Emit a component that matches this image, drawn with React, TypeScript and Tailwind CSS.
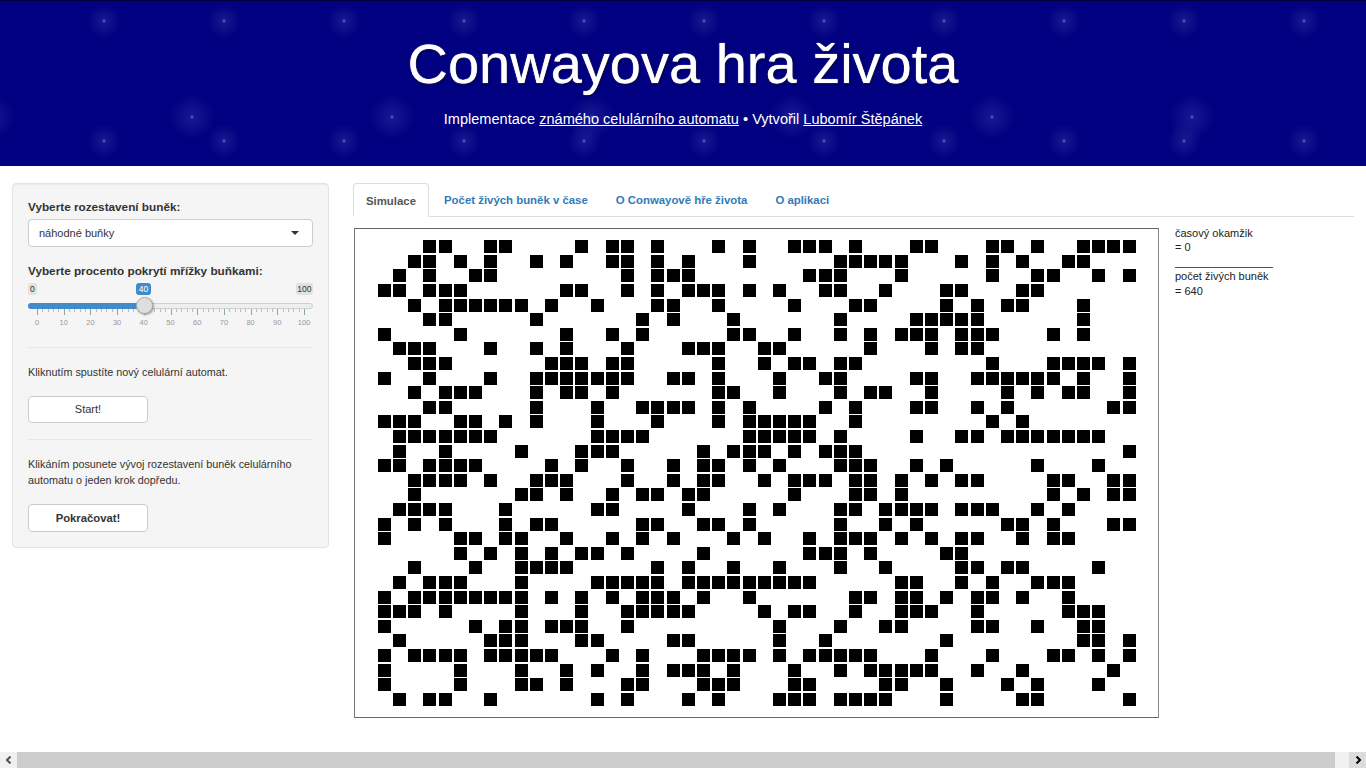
const rows: number[][] = [
  [3,4,7,8,13,15,16,18,22,24,27,28,29,31,35,36,40,41,43,46,47,48,49],
  [2,3,5,7,10,12,15,16,18,20,24,30,31,32,33,34,38,40,42,45,46],
  [1,3,6,7,16,18,19,20,28,29,30,34,40,43,44,47,49],
  [0,1,3,4,5,12,13,16,18,20,21,22,24,26,29,30,33,37,38,42,43],
  [2,4,5,6,7,8,9,11,14,18,19,22,27,31,32,37,39,41,42,46],
  [3,4,10,17,19,23,30,35,36,37,38,39,46],
  [0,5,12,15,17,23,24,27,30,32,34,35,36,38,39,40,44,46],
  [1,2,3,7,10,12,16,20,21,22,25,26,32,36,38,39],
  [2,3,4,11,12,13,15,16,22,25,27,28,30,31,40,44,45,46,47,49],
  [0,3,7,10,11,12,13,14,15,16,19,20,22,26,29,30,35,36,39,40,41,42,43,44,46,49],
  [2,4,5,6,10,12,13,15,22,23,26,30,32,33,36,41,43,45,46,49],
  [3,4,10,14,17,18,19,20,22,24,29,31,35,36,39,41,48,49],
  [0,1,2,5,6,8,10,14,18,22,24,25,26,27,28,31,40,42],
  [1,2,3,4,5,6,7,14,15,16,17,24,25,26,27,28,30,35,38,39,41,42,43,44,45,46,47],
  [1,4,9,13,14,15,21,23,24,25,27,29,30,31,49],
  [0,1,3,4,5,6,11,13,16,19,21,22,24,26,30,31,32,35,37,43,47],
  [2,3,4,5,7,10,11,12,16,19,21,22,25,27,28,29,31,32,34,36,38,39,44,45,48,49],
  [2,9,10,12,15,17,18,20,21,27,31,32,34,44,46,48,49],
  [1,2,3,4,8,14,15,20,24,26,30,31,33,34,35,36,38,39,40,43,45],
  [0,2,4,8,10,11,17,18,21,22,24,30,33,35,41,42,44,48,49],
  [0,5,6,8,9,12,15,17,19,23,25,28,30,31,32,34,36,38,39,42,44,45],
  [5,7,9,11,13,14,16,21,28,29,30,32,37,38],
  [2,6,9,10,11,12,18,20,23,26,30,33,38,39,41,42,47],
  [1,3,4,5,9,14,15,16,17,18,20,21,22,23,24,25,26,27,28,34,35,38,40,43,44,45],
  [0,2,3,4,5,6,7,8,9,11,13,15,17,18,19,21,24,31,32,34,35,37,39,40,42,45],
  [0,1,2,4,9,13,16,17,18,19,20,25,27,28,31,34,35,36,39,45,46,47],
  [0,6,8,9,11,12,13,16,26,30,33,34,39,40,43,46,47],
  [1,7,8,9,13,14,19,20,26,29,37,46,47,49],
  [0,2,3,4,5,7,8,9,10,11,15,17,21,22,23,24,26,28,29,30,31,32,36,40,44,45,47,49],
  [0,5,9,12,14,17,19,20,21,23,27,30,32,33,34,35,36,39,42,48],
  [0,5,9,10,12,16,17,21,22,23,27,28,33,34,37,41,43,47],
  [1,3,4,7,14,16,20,22,26,27,28,30,31,32,33,37,42,43,49],
];

const alive = rows.reduce((n, r) => n + r.length, 0);

function Plot() {
  return (
    <svg width="805" height="490" viewBox="0 0 805 490" className="block shrink-0" shapeRendering="crispEdges">
      <rect x="0" y="0" width="805" height="490" fill="#fff" />
      <line x1="0" y1="0.5" x2="805" y2="0.5" stroke="#666" />
      <line x1="0" y1="489.5" x2="805" y2="489.5" stroke="#666" />
      <line x1="0.5" y1="0" x2="0.5" y2="490" stroke="#777" />
      <line x1="804.5" y1="0" x2="804.5" y2="490" stroke="#888" />
      {rows.map((cols, r) =>
        cols.map((c) => (
          <rect key={`${r}-${c}`} x={Math.floor(24.3 + 15.2 * c)} y={Math.round(12.2 + 14.6 * r)} width="13" height="13" fill="#000" />
        )),
      )}
    </svg>
  );
}

function SliderTicks() {
  const major = Array.from({ length: 11 }, (_, i) => 9 + i * 26.7);
  const minor: number[] = [];
  major.slice(0, 10).forEach((m) => {
    for (let k = 1; k < 5; k++) minor.push(m + (k * 26.7) / 5);
  });
  return (
    <svg width="285" height="8" viewBox="0 0 285 8" className="block" shapeRendering="crispEdges">
      {major.map((x) => (
        <line key={x} x1={Math.round(x) + 0.5} y1="0" x2={Math.round(x) + 0.5} y2="6" stroke="#8aa" />
      ))}
      {minor.map((x) => (
        <line key={x} x1={Math.round(x) + 0.5} y1="0" x2={Math.round(x) + 0.5} y2="3" stroke="#bbb" />
      ))}
    </svg>
  );
}

function Slider() {
  const labels = ["0", "10", "20", "30", "40", "50", "60", "70", "80", "90", "100"];
  return (
    <div className="relative mt-[4px] h-[48px]">
      <div className="flex h-[12px] justify-between text-[8.5px] leading-[12px] text-[#333]">
        <span className="rounded-[3px] bg-[#e1e1e1] px-[2px]">0</span>
        <span className="rounded-[3px] bg-[#e1e1e1] px-[1.5px]">100</span>
      </div>
      <span className="absolute left-[108px] top-0 h-[12px] w-[15px] rounded-[3px] bg-[#428bca] text-center text-[8.5px] leading-[12px] text-white">40</span>
      <div className="mt-[8px] h-[6px] rounded-[3px] border border-[#cfcfcf] bg-[#eee]">
        <div className="-ml-px -mt-px h-[6px] w-[116px] rounded-l-[3px] bg-[#428bca]" />
      </div>
      <span className="absolute left-[107.5px] top-[13.5px] h-[17px] w-[17px] rounded-full border border-[#aaa] bg-[#dedede] shadow-[1px_1px_2px_rgba(0,0,0,0.35)]" />
      <SliderTicks />
      <div className="-mx-[4.35px] mt-[1px] grid grid-cols-11 text-center text-[7.5px] leading-[10px] text-[#999]">
        {labels.map((l) => (
          <span key={l}>{l}</span>
        ))}
      </div>
    </div>
  );
}

function Chevron({ dir, color }: { dir: "left" | "right"; color: string }) {
  return (
    <svg width="8" height="8" viewBox="0 0 8 8">
      <path d={dir === "left" ? "M5.5 0.5 L2 4 L5.5 7.5" : "M2.5 0.5 L6 4 L2.5 7.5"} fill="none" stroke={color} strokeWidth="2" />
    </svg>
  );
}

export default function App() {
  return (
    <div className="flex h-[768px] w-[1366px] flex-col overflow-hidden bg-white font-['Liberation_Sans',Arial,sans-serif] text-[#333]">
      <header className="h-[166px] shrink-0 border-t border-[#00003a] bg-[#000080] pt-[31px] text-center text-white [background-image:radial-gradient(circle,rgba(130,135,220,0.6)_0,rgba(130,135,220,0.6)_1px,rgba(70,75,180,0.3)_2px,rgba(70,75,180,0.17)_9px,rgba(70,75,180,0)_18px),radial-gradient(circle,rgba(130,135,220,0.6)_0,rgba(130,135,220,0.6)_1px,rgba(70,75,180,0.3)_2px,rgba(70,75,180,0.17)_12px,rgba(70,75,180,0)_24px)] [background-position:44px_-40px,92px_16px] [background-size:120px_120px,200px_200px]">
        <h1 className="text-[56px] leading-[64px] [text-shadow:0_0_1px_#fff,1px_1px_2px_rgba(0,0,0,0.7)]">Conwayova hra života</h1>
        <p className="mt-[14px] text-[14.55px] leading-[18px]">
          Implementace <a className="underline">známého celulárního automatu</a> • Vytvořil <a className="underline">Lubomír Štěpánek</a>
        </p>
      </header>

      <main className="flex flex-1 overflow-hidden">
        <aside className="ml-[12px] mt-[17px] h-[365px] w-[317px] shrink-0 rounded-[4px] border border-[#e3e3e3] bg-[#f5f5f5] p-[15px] shadow-[inset_0_1px_1px_rgba(0,0,0,0.05)]">
          <label className="block text-[11.75px] font-bold leading-[16px]">Vyberte rozestavení buněk:</label>
          <div className="mt-[4px] flex h-[28px] items-center justify-between rounded-[4px] border border-[#ccc] bg-white pl-[10px] pr-[13px] text-[11px] text-[#333]">
            <span>náhodné buňky</span>
            <svg width="8" height="4" viewBox="0 0 8 4">
              <path d="M0 0 H8 L4 4 Z" fill="#333" />
            </svg>
          </div>
          <label className="mt-[16px] block text-[11.75px] font-bold leading-[16px]">Vyberte procento pokrytí mřížky buňkami:</label>
          <Slider />
          <hr className="mt-[16px] border-t border-[#e8e8e8]" />
          <p className="mt-[16px] text-[10.8px] leading-[16px]">Kliknutím spustíte nový celulární automat.</p>
          <button className="mt-[16px] block h-[27px] w-[120px] rounded-[4px] border border-[#ccc] bg-white text-[11px] text-[#333]">Start!</button>
          <hr className="mt-[16px] border-t border-[#e8e8e8]" />
          <p className="mt-[16px] text-[10.8px] leading-[16px]">
            Klikáním posunete vývoj rozestavení buněk celulárního
            <br />
            automatu o jeden krok dopředu.
          </p>
          <button className="mt-[16px] block h-[28px] w-[120px] rounded-[4px] border border-[#ccc] bg-white text-[11.3px] font-bold text-[#333]">Pokračovat!</button>
        </aside>

        <section className="ml-[24px] mt-[17px] w-[1001px] shrink-0">
          <nav className="flex h-[34px] border-b border-[#ddd] text-[11.4px] font-bold leading-[34px] text-[#337ab7]">
            <a className="h-[34px] w-[76px] rounded-t-[4px] border border-b-white border-[#ddd] bg-white text-center text-[#555]">Simulace</a>
            <a className="ml-[2px] px-[13px]">Počet živých buněk v čase</a>
            <a className="ml-[2px] px-[13px]">O Conwayově hře života</a>
            <a className="ml-[2px] px-[13px]">O aplikaci</a>
          </nav>
          <div className="ml-[1px] mt-[11px] flex">
            <Plot />
            <div className="ml-[16px] -mt-[2px] text-[11px] leading-[14.4px] text-[#222]">
              časový okamžik
              <br />= 0
              <br />________________
              <br />počet živých buněk
              <br />= {alive}
            </div>
          </div>
        </section>
      </main>

      <div className="flex h-[16px] shrink-0 bg-[#f1f1f1]">
        <div className="flex h-full w-[17px] items-center justify-center bg-[#f0f0f0]">
          <Chevron dir="left" color="#505050" />
        </div>
        <div className="h-full w-[1318px] bg-[#cdcdcd]" />
        <div className="h-full w-[14px]" />
        <div className="flex h-full w-[17px] items-center justify-center bg-[#dcdcdc]">
          <Chevron dir="right" color="#000" />
        </div>
      </div>
    </div>
  );
}
